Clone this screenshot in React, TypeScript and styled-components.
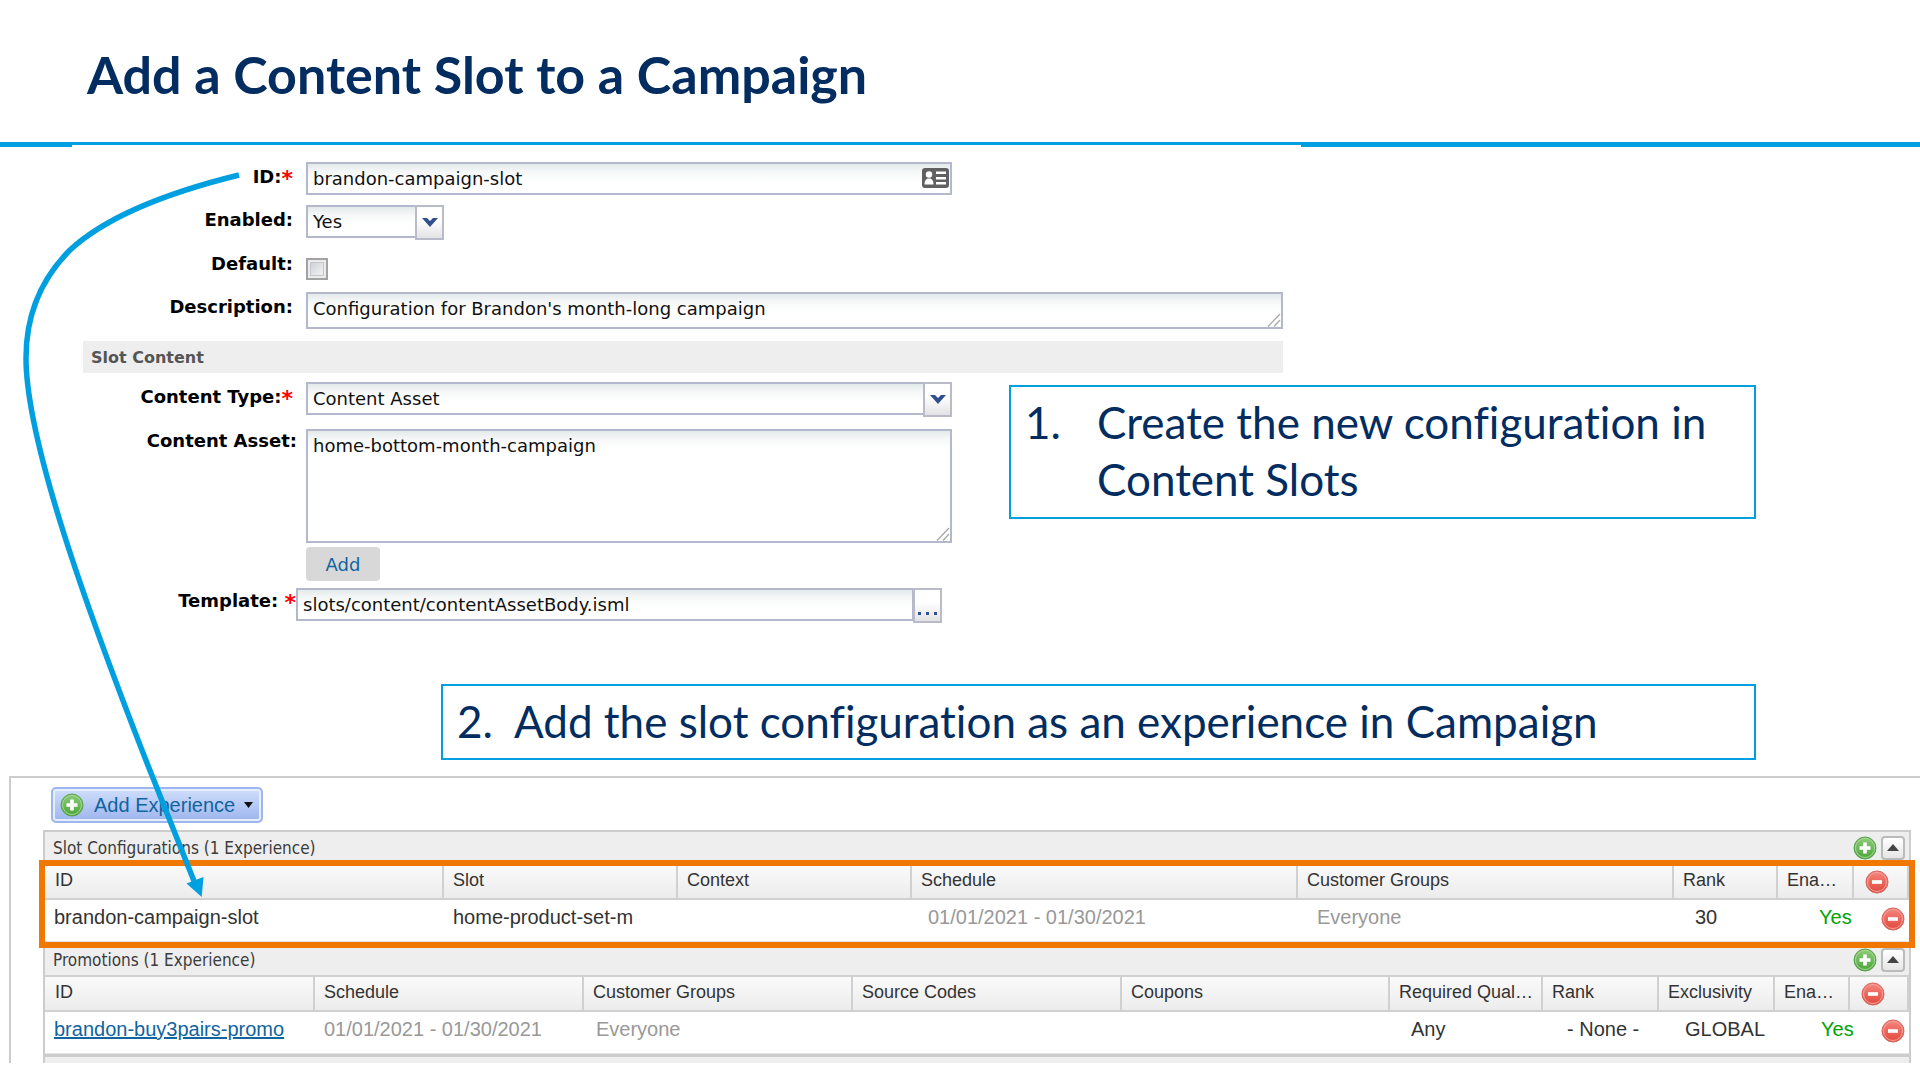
import React from "react";
import styled, { createGlobalStyle, css } from "styled-components";

const GlobalStyle = createGlobalStyle`
  *, *::before, *::after { box-sizing: border-box; }
  body { margin: 0; background: #fff; overflow-x: hidden; }
`;

const slideFont = `Lato, "Open Sans", sans-serif`;
const formFont = `"DejaVu Sans", Verdana, sans-serif`;
const gridFont = `"Liberation Sans", Arial, sans-serif`;
const blue = "#009fdf";
const navy = "#032d60";

const Slide = styled.main`
  position: relative;
  display: flex;
  flex-direction: column;
`;

const Header = styled.header`
  height: 142px;
  padding: 40px 87px 0;
`;

const Title = styled.h1`
  margin: 0;
  font: 700 52px/68px ${slideFont};
  font-variant-ligatures: none;
  color: ${navy};
`;

const Rule = styled.div`
  display: flex;
  align-items: flex-start;
  height: 20px;
`;

const RulePart = styled.span<{ $width?: string; $thin?: boolean }>`
  flex: ${(p) => (p.$width ? `0 0 ${p.$width}` : "1")};
  height: ${(p) => (p.$thin ? 3 : 5)}px;
  background: ${blue};
`;

const Form = styled.form`
  display: flex;
  flex-direction: column;
  padding: 0 164px 0 83px;
  font: 18px/28px ${formFont};
  color: #111;
`;

const FormTop = styled.div`
  width: 100%;
  max-width: 1200px;
  display: grid;
  grid-template-rows: 43px 44px 43px 49px;
`;

const Row = styled.div`
  display: flex;
  align-items: flex-start;
`;

const Label = styled.label<{ $width?: number; $gap?: number }>`
  flex: 0 0 ${(p) => p.$width ?? 223}px;
  padding: 1px ${(p) => p.$gap ?? 13}px 0 0;
  text-align: right;
  font-weight: 700;
  white-space: nowrap;
  color: #000;
`;

const Star = styled.span`
  font-size: 22px;
  line-height: 20px;
  vertical-align: -3px;
  color: #f00;
`;

const Control = styled.div<{ $width?: string; $top?: number }>`
  position: relative;
  display: flex;
  flex: 0 1 ${(p) => p.$width ?? "646px"};
  min-width: 0;
  margin-top: ${(p) => p.$top ?? 0}px;
`;

const fieldLook = css`
  flex: 1;
  min-width: 0;
  margin: 0;
  border: 2px solid #b5b8cc;
  border-radius: 0;
  outline: none;
  background: linear-gradient(#e3e9ea, #f6f8f8 8px, #fff 18px);
  font: 18px/26px ${formFont};
  color: #111;
`;

const TextInput = styled.input`
  ${fieldLook}
  height: 33px;
  padding: 0 5px;
`;

const Select = styled.select`
  ${fieldLook}
  appearance: none;
  height: 33px;
  padding: 1px 30px 0 5px;
`;

const TextArea = styled.textarea<{ $height: number }>`
  ${fieldLook}
  height: ${(p) => p.$height}px;
  padding: 2px 5px;
  resize: none;
  overflow: hidden;
`;

const triggerLook = css`
  display: flex;
  align-items: center;
  justify-content: center;
  width: 29px;
  height: 35px;
  padding: 0;
  border: 2px solid #b9bcc8;
  background: linear-gradient(#fff 40%, #e3e3e6);
`;

const SelectTrigger = styled.span`
  ${triggerLook}
  position: absolute;
  top: 0;
  right: 0;
  pointer-events: none;
`;

const BrowseButton = styled.button`
  ${triggerLook}
  margin-left: -1px;
  align-items: flex-end;
  padding-bottom: 6px;
`;

const CardIcon = styled.svg`
  position: absolute;
  top: 6px;
  right: 3px;
`;

const Grip = styled.svg`
  position: absolute;
  right: 2px;
  bottom: 2px;
`;

const CheckBox = styled.input`
  appearance: none;
  width: 22px;
  height: 22px;
  margin: 0;
  border: 2px solid #a2a2a2;
  background: linear-gradient(135deg, #c9cdd2, #f8f8f8);
  box-shadow: inset 0 0 0 2px #ececec, inset 0 0 0 3px #c4c8cc;
`;

const SectionBar = styled.h2`
  width: 100%;
  max-width: 1200px;
  margin: 0;
  padding: 1px 8px 0;
  background: #eee;
  font: 700 16px/31px ${formFont};
  color: #555;
`;

const FormBottom = styled.div`
  display: flex;
  align-items: flex-start;
  gap: 57px;
  padding-top: 9px;
`;

const Fields = styled.div`
  flex: 0 1 869px;
  display: grid;
  grid-template-rows: 44px 121px 39px 36px;
`;

const AddButton = styled.button`
  width: 74px;
  height: 34px;
  margin-left: 223px;
  padding: 1px 0 0;
  border: 0;
  border-radius: 4px;
  background: #d8d8d8;
  font: 18px/33px ${formFont};
  color: #10649f;
`;

const Callout = styled.ol<{ $wide?: boolean }>`
  display: grid;
  grid-template-columns: ${(p) => (p.$wide ? 57 : 72)}px 1fr;
  flex: 1;
  margin: ${(p) => (p.$wide ? "62px 164px 16px 441px" : "3px 0 0")};
  padding: 7px 14px ${(p) => (p.$wide ? 8 : 9)}px;
  border: 2px solid ${blue};
  background: #fff;
  list-style: none;
  font: 44px/57px ${slideFont};
  font-variant-ligatures: none;
  color: ${navy};
`;

const CalloutItem = styled.li`
  display: contents;
`;

const Panel = styled.section`
  margin-left: 9px;
  padding: 9px 9px 0 32px;
  border: solid #ccc;
  border-width: 2px 0 0 2px;
  font: 20px/24px ${gridFont};
  color: #333;
`;

const ExperienceButton = styled.button`
  display: flex;
  align-items: center;
  height: 36px;
  margin: 0 0 7px 8px;
  padding: 0 8px 0 7px;
  border: 2px solid #9db7ee;
  border-radius: 5px;
  background: linear-gradient(#cfdefb, #9db5ee);
  box-shadow: inset 0 0 0 2px #e6eefe;
  font: 20px/32px ${gridFont};
  color: #10649f;
`;

const ButtonText = styled.span`
  margin: 0 9px 0 10px;
`;

const Group = styled.section`
  position: relative;
  border: solid #ccc;
  border-width: 2px 2px 0;
`;

const GroupBar = styled.div`
  display: flex;
  align-items: center;
  gap: 4px;
  height: 31px;
  padding: 0 4px 0 8px;
  background: #eee;
`;

const GroupTitle = styled.h3`
  flex: 1;
  margin: 0;
  font: 17px/24px "DejaVu Sans Condensed", "DejaVu Sans", Tahoma, sans-serif;
  color: #3c3c3c;
`;

const IconButton = styled.button`
  display: flex;
  padding: 0;
  border: 0;
  background: none;
`;

const CollapseButton = styled.button`
  display: flex;
  align-items: center;
  justify-content: center;
  width: 24px;
  height: 24px;
  padding: 0;
  border: 2px solid #bbb;
  border-radius: 4px;
  background: linear-gradient(#fff, #e6e6e6);
`;

const Table = styled.table`
  width: 100%;
  table-layout: fixed;
  border-collapse: separate;
  border-spacing: 0;
`;

const Col = styled.col<{ $width?: number }>`
  width: ${(p) => (p.$width ? `${p.$width}px` : "auto")};
`;

const HeadCell = styled.th`
  height: 37px;
  padding: 0 0 3px 9px;
  border: solid #d0d0d0;
  border-width: 2px 2px 2px 0;
  background: linear-gradient(#fafafa, #ececec);
  text-align: left;
  white-space: nowrap;
  font-size: 18px;
  font-weight: 400;

  &:first-child {
    padding-left: 10px;
  }

  ${IconButton} {
    margin: 4px 0 0 2px;
  }
`;

const Cell = styled.td<{ $indent?: number; $tone?: string }>`
  height: 42px;
  padding: 0 0 7px ${(p) => p.$indent ?? 9}px;
  border-bottom: 1px solid #e4e4e4;
  background: #fff;
  white-space: nowrap;
  color: ${(p) => p.$tone ?? "#333"};
`;

const RemoveCell = styled(Cell)`
  padding: 0 4px 3px 0;

  ${IconButton} {
    margin-left: auto;
  }
`;

const ItemLink = styled.a`
  color: #10649f;
  text-decoration: underline;
`;

const Highlight = styled.div`
  position: absolute;
  z-index: 1;
  top: 28px;
  right: -6px;
  bottom: -6px;
  left: -6px;
  border: 6px solid #f07800;
  pointer-events: none;
`;

const NextGroupEdge = styled.div`
  height: 9px;
  border: solid #ccc;
  border-width: 3px 2px 0;
  background: #eee;
`;

const Arrow = styled.svg`
  position: absolute;
  z-index: 2;
  top: 0;
  left: 0;
  pointer-events: none;
`;

const Chevron = () => (
  <svg width="16" height="10" viewBox="0 0 16 10" aria-hidden="true">
    <path d="M0 0h5l3 3 3-3h5l-8 9z" fill="#2f4f8f" />
  </svg>
);

const ResizeGrip = () => (
  <Grip width="14" height="14" viewBox="0 0 14 14" aria-hidden="true">
    <path d="M1 13.500 13 1M7 13.500 13 7" stroke="#a8a8a8" strokeWidth="1.300" fill="none" />
  </Grip>
);

const RoundIcon = ({ kind }: { kind: "add" | "remove" }) => {
  const add = kind === "add";
  return (
    <svg width="24" height="24" viewBox="0 0 24 24" aria-hidden="true">
      <defs>
        <linearGradient id={`disc-${kind}`} x1="0" y1="0" x2="0" y2="1">
          <stop offset="0" stopColor={add ? "#8fcb7c" : "#f4877e"} />
          <stop offset="1" stopColor={add ? "#4ba53a" : "#e2473c"} />
        </linearGradient>
      </defs>
      <circle cx="12" cy="12" r="11" fill={`url(#disc-${kind})`} stroke={add ? "#58a548" : "#d8665c"} />
      <circle cx="12" cy="12" r="9.500" fill="none" stroke={add ? "#a5d696" : "#f5a59d"} />
      <path
        d={add ? "M10.200 6.500h3.600v3.700h3.700v3.600h-3.700v3.700h-3.600v-3.700H6.500v-3.600h3.700z" : "M7 10.200h10v3.600H7z"}
        fill="#fff"
      />
    </svg>
  );
};

const RemoveButton = ({ label }: { label: string }) => (
  <IconButton type="button" aria-label={label}>
    <RoundIcon kind="remove" />
  </IconButton>
);

type CellData = { text: string; indent?: number; tone?: string; link?: boolean };
type GroupData = { title: string; widths: number[]; heads: string[]; cells: CellData[]; highlighted?: boolean };

const grey = "#999";
const green = "#00a300";

const groups: GroupData[] = [
  {
    title: "Slot Configurations (1 Experience)",
    widths: [399, 234, 234, 386, 376, 104, 76],
    heads: ["ID", "Slot", "Context", "Schedule", "Customer Groups", "Rank", "Ena…"],
    cells: [
      { text: "brandon-campaign-slot" },
      { text: "home-product-set-m" },
      { text: "" },
      { text: "01/01/2021 - 01/30/2021", indent: 16, tone: grey },
      { text: "Everyone", indent: 19, tone: grey },
      { text: "30", indent: 21 },
      { text: "Yes", indent: 41, tone: green },
    ],
    highlighted: true,
  },
  {
    title: "Promotions (1 Experience)",
    widths: [270, 269, 269, 269, 268, 153, 116, 116, 75],
    heads: [
      "ID", "Schedule", "Customer Groups", "Source Codes", "Coupons",
      "Required Qual…", "Rank", "Exclusivity", "Ena…",
    ],
    cells: [
      { text: "brandon-buy3pairs-promo", link: true },
      { text: "01/01/2021 - 01/30/2021", tone: grey },
      { text: "Everyone", indent: 12, tone: grey },
      { text: "" },
      { text: "" },
      { text: "Any", indent: 21 },
      { text: "- None -", indent: 24 },
      { text: "GLOBAL", indent: 26 },
      { text: "Yes", indent: 46, tone: green },
    ],
  },
];

const ExperienceGroup = ({ group }: { group: GroupData }) => (
  <Group>
    <GroupBar>
      <GroupTitle>{group.title}</GroupTitle>
      <IconButton type="button" aria-label="Add">
        <RoundIcon kind="add" />
      </IconButton>
      <CollapseButton type="button" aria-label="Collapse">
        <svg width="12" height="7" viewBox="0 0 12 7" aria-hidden="true">
          <path d="M6 0 12 7H0z" fill="#444" />
        </svg>
      </CollapseButton>
    </GroupBar>
    <Table>
      <colgroup>
        {group.widths.map((width, i) => (
          <Col key={i} $width={width} />
        ))}
        <Col />
      </colgroup>
      <thead>
        <tr>
          {group.heads.map((head) => (
            <HeadCell key={head}>{head}</HeadCell>
          ))}
          <HeadCell>
            <RemoveButton label="Remove all" />
          </HeadCell>
        </tr>
      </thead>
      <tbody>
        <tr>
          {group.cells.map((cell, i) => (
            <Cell key={i} $indent={cell.indent} $tone={cell.tone}>
              {cell.link ? <ItemLink href="#promo">{cell.text}</ItemLink> : cell.text}
            </Cell>
          ))}
          <RemoveCell>
            <RemoveButton label="Remove" />
          </RemoveCell>
        </tr>
      </tbody>
    </Table>
    {group.highlighted && <Highlight />}
  </Group>
);

export default function App() {
  return (
    <Slide>
      <GlobalStyle />
      <Header>
        <Title>Add a Content Slot to a Campaign</Title>
      </Header>
      <Rule>
        <RulePart $width="72px" />
        <RulePart $width="1229px" $thin />
        <RulePart />
      </Rule>

      <Form>
        <FormTop>
          <Row>
            <Label htmlFor="slot-id">ID:<Star>*</Star></Label>
            <Control>
              <TextInput id="slot-id" defaultValue="brandon-campaign-slot" />
              <CardIcon width="27" height="20" viewBox="0 0 27 20" aria-hidden="true">
                <rect width="27" height="20" rx="3" fill="#606060" />
                <circle cx="7" cy="6.500" r="3.200" fill="#fff" />
                <path d="M2.500 16.500c0-4 1.500-5 3-6h3c1.500 1 3 2 3 6z" fill="#fff" />
                <path d="M14 3.500h10v2.500H14zM14 9h10v2.500H14zM14 14h10v2.500H14z" fill="#fff" />
              </CardIcon>
            </Control>
          </Row>
          <Row>
            <Label htmlFor="enabled">Enabled:</Label>
            <Control $width="138px">
              <Select id="enabled" defaultValue="Yes">
                <option>Yes</option>
                <option>No</option>
              </Select>
              <SelectTrigger><Chevron /></SelectTrigger>
            </Control>
          </Row>
          <Row>
            <Label htmlFor="is-default">Default:</Label>
            <Control $top={9}>
              <CheckBox id="is-default" type="checkbox" />
            </Control>
          </Row>
          <Row>
            <Label htmlFor="description">Description:</Label>
            <Control $width="977px">
              <TextArea id="description" $height={37} defaultValue="Configuration for Brandon's month-long campaign" />
              <ResizeGrip />
            </Control>
          </Row>
        </FormTop>
        <SectionBar>Slot Content</SectionBar>
        <FormBottom>
          <Fields>
            <Row>
              <Label htmlFor="content-type">Content Type:<Star>*</Star></Label>
              <Control>
                <Select id="content-type" defaultValue="Content Asset">
                  <option>Content Asset</option>
                </Select>
                <SelectTrigger><Chevron /></SelectTrigger>
              </Control>
            </Row>
            <Row>
              <Label htmlFor="content-asset" $gap={9}>Content Asset:</Label>
              <Control $top={3}>
                <TextArea id="content-asset" $height={114} defaultValue="home-bottom-month-campaign" />
                <ResizeGrip />
              </Control>
            </Row>
            <AddButton type="button">Add</AddButton>
            <Row>
              <Label htmlFor="template" $width={213} $gap={0}>Template: <Star>*</Star></Label>
              <Control $top={2}>
                <TextInput id="template" defaultValue="slots/content/contentAssetBody.isml" />
                <BrowseButton type="button" aria-label="Browse">
                  <svg width="21" height="3" viewBox="0 0 21 3" aria-hidden="true">
                    <path d="M1 0h3v3H1zM9 0h3v3H9zM17 0h3v3h-3z" fill="#2f4f8f" />
                  </svg>
                </BrowseButton>
              </Control>
            </Row>
          </Fields>
          <Callout>
            <CalloutItem>
              <span>1.</span>
              <span>Create the new configuration in Content Slots</span>
            </CalloutItem>
          </Callout>
        </FormBottom>
      </Form>

      <Callout $wide>
        <CalloutItem>
          <span>2.</span>
          <span>Add the slot configuration as an experience in Campaign</span>
        </CalloutItem>
      </Callout>

      <Panel>
        <ExperienceButton type="button">
          <RoundIcon kind="add" />
          <ButtonText>Add Experience</ButtonText>
          <svg width="9" height="6" viewBox="0 0 9 6" aria-hidden="true">
            <path d="M0 0h9L4.500 6z" fill="#111" />
          </svg>
        </ExperienceButton>
        {groups.map((group) => (
          <ExperienceGroup key={group.title} group={group} />
        ))}
        <NextGroupEdge />
      </Panel>

      <Arrow width="260" height="910" viewBox="0 0 260 910" aria-hidden="true">
        <path
          d="M239 175C178 190 110 213 70 250C40 280 26 315 26 358C26 440 86 607 147 763L194 881"
          fill="none"
          stroke={blue}
          strokeWidth="5.500"
        />
        <path d="M186.500 883.500 203.500 877 201.700 897z" fill={blue} />
      </Arrow>
    </Slide>
  );
}
